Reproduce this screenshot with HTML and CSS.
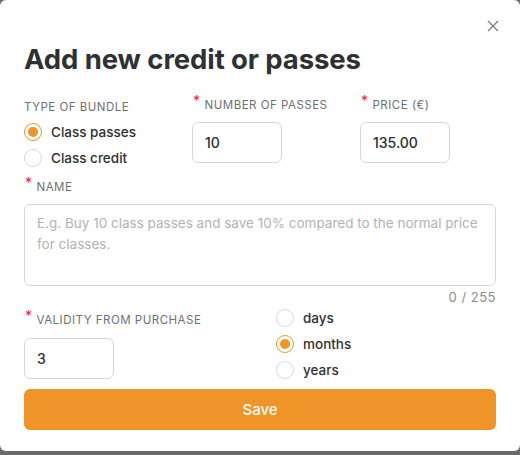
FILE: index.html
```html
<!DOCTYPE html>
<html lang="en">
<head>
<meta charset="utf-8">
<link rel="stylesheet" href="styles.css">
</head>
<body>
<div class="modal">
  <button class="close" aria-label="Close">
    <svg width="12" height="12" viewBox="0 0 12 12"><path d="M1 1 L11 11 M11 1 L1 11" stroke="#7a7d80" stroke-width="1.3" fill="none"/></svg>
  </button>
  <h1 class="title">Add new credit or passes</h1>

  <div class="row-top">
    <div class="field">
      <div class="label plain">TYPE OF BUNDLE</div>
      <div class="radios">
        <label class="radio"><span class="dot checked"></span><span class="rtext">Class passes</span></label>
        <label class="radio"><span class="dot"></span><span class="rtext">Class credit</span></label>
      </div>
    </div>
    <div class="field">
      <div class="label"><span class="req">*</span>NUMBER OF PASSES</div>
      <div class="input small">10</div>
    </div>
    <div class="field">
      <div class="label"><span class="req">*</span>PRICE (€)</div>
      <div class="input small">135.00</div>
    </div>
  </div>

  <div class="field name">
    <div class="label"><span class="req">*</span>NAME</div>
    <div class="textarea">E.g. Buy 10 class passes and save 10% compared to the normal price for classes.</div>
    <div class="counter">0 / 255</div>
  </div>

  <div class="row-bottom">
    <div class="field">
      <div class="label"><span class="req">*</span>VALIDITY FROM PURCHASE</div>
      <div class="input small">3</div>
    </div>
    <div class="radios units">
      <label class="radio"><span class="dot"></span><span class="rtext">days</span></label>
      <label class="radio"><span class="dot checked"></span><span class="rtext">months</span></label>
      <label class="radio"><span class="dot"></span><span class="rtext">years</span></label>
    </div>
  </div>

  <button class="save">Save</button>
</div>
</body>
</html>
```

FILE: styles.css
```css
* { box-sizing: border-box; }
html, body { margin: 0; padding: 0; }
body {
  background: #6b6b6b;
  width: 520px;
  height: 455px;
  font-family: Inter, "Noto Sans", sans-serif;
  color: #2e3134;
}
.modal {
  position: relative;
  background: #fff;
  width: 520px;
  height: 451px;
  border-radius: 6px;
  padding: 0 24px;
  overflow: hidden;
}
.close {
  position: absolute;
  top: 20px;
  right: 21px;
  border: 0;
  background: transparent;
  padding: 0;
  width: 12px;
  height: 12px;
  display: block;
}
.close svg { display: block; }
.title {
  margin: 0;
  padding-top: 41px;
  font-size: 27.5px;
  line-height: 36px;
  font-weight: 700;
  color: #2e3134;
  letter-spacing: -0.1px;
}
.row-top {
  display: grid;
  grid-template-columns: 168px 168px 1fr;
  margin-top: 19px;
}
.label {
  font-size: 11.5px;
  line-height: 16px;
  height: 16px;
  color: #6d7175;
  letter-spacing: 0.5px;
  margin-bottom: 10px;
  white-space: nowrap;
}
.label.plain { padding-top: 3px; margin-bottom: 7px; }
.req {
  color: #f5222d;
  font-size: 14px;
  margin-right: 4px;
  position: relative;
  top: -3px;
  display: inline-block;
  margin-left: 1px;
}
.radios { display: flex; flex-direction: column; }
.radio {
  display: flex;
  align-items: center;
  height: 26px;
  gap: 9px;
}
.dot {
  width: 18px;
  height: 18px;
  border-radius: 50%;
  border: 1px solid #d9d9d9;
  background: #fff;
  position: relative;
  flex: none;
}
.dot.checked { border-color: #ee9428; }
.dot.checked::after {
  content: "";
  position: absolute;
  left: 3px; top: 3px;
  width: 10px; height: 10px;
  border-radius: 50%;
  background: #ee9428;
}
.rtext { font-size: 13.5px; font-weight: 500; color: #2e3134; }
.input {
  height: 41px;
  border: 1px solid #d6d6d6;
  border-radius: 6px;
  padding: 0 12px;
  display: flex;
  align-items: center;
  font-size: 14px;
  font-weight: 500;
  color: #2b2d30;
}
.input.small { width: 90px; }
.name { margin-top: 7px; }
.textarea {
  height: 82px;
  border: 1px solid #d6d6d6;
  border-radius: 6px;
  padding: 8px 12px;
  font-size: 13.5px;
  line-height: 21px;
  color: #b3b3b3;
}
.counter {
  text-align: right;
  font-size: 13px;
  line-height: 16px;
  margin-top: 3px;
  color: #8a8d90;
  letter-spacing: 0.5px;
}
.row-bottom {
  display: grid;
  grid-template-columns: 252px 1fr;
  margin-top: 0;
}
.row-bottom .label { margin-top: 6px; margin-bottom: 11px; }
.units .radio { height: 26px; }
.save {
  display: block;
  width: 100%;
  height: 41px;
  margin-top: 6px;
  border: 0;
  border-radius: 6px;
  background: #ee9428;
  color: #fff;
  font-family: Inter, "Noto Sans", sans-serif;
  font-size: 15px;
  font-weight: 500;
}
```
